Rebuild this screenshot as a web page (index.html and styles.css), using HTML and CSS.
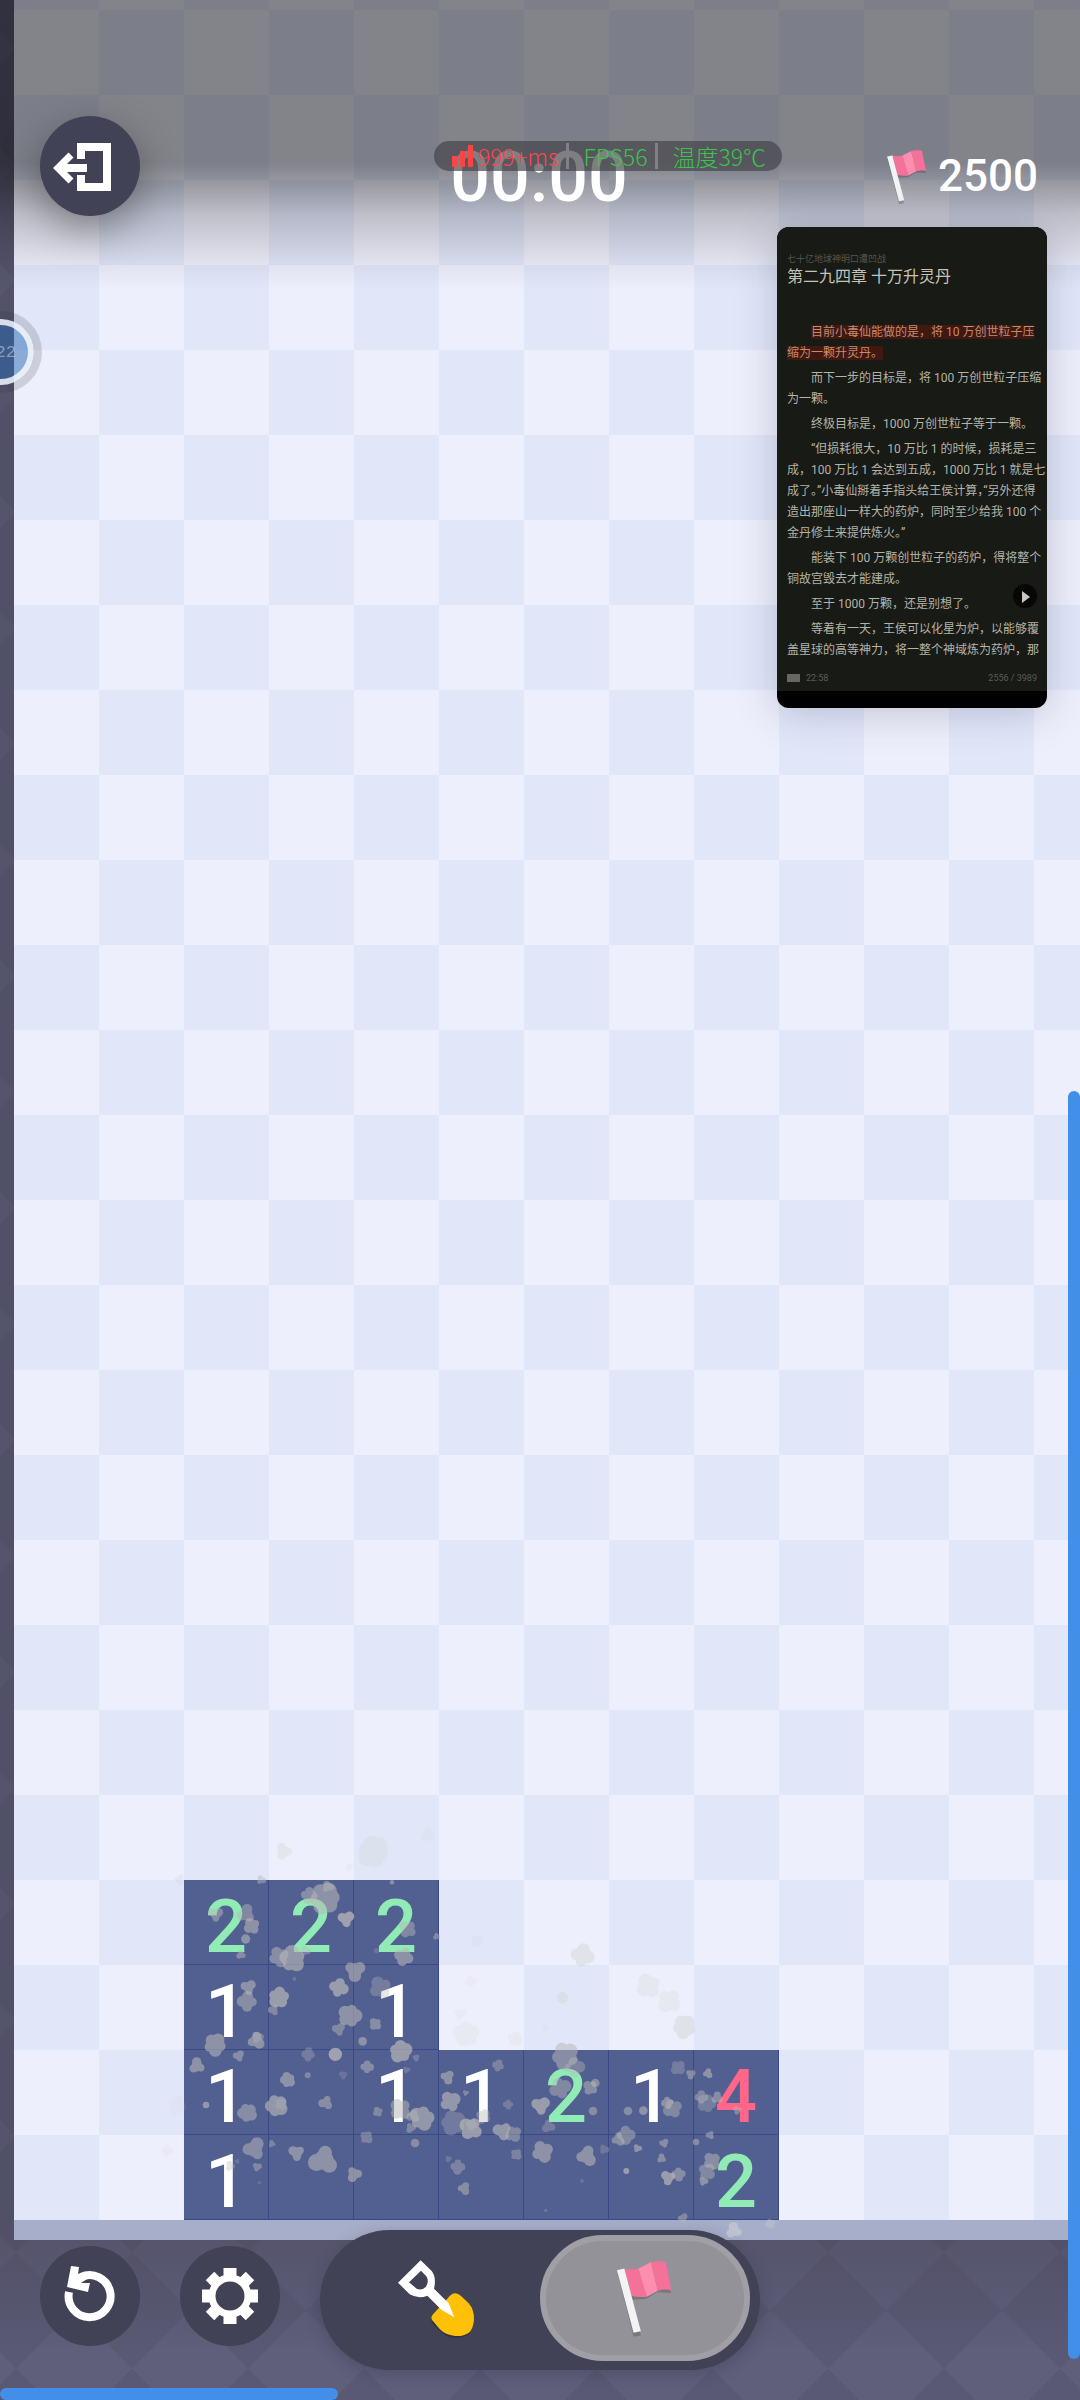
FILE: index.html
```html
<!DOCTYPE html>
<html lang="zh-CN">

<head>
    <meta charset="UTF-8">
    <meta name="viewport" content="width=device-width, initial-scale=1.0">
    <title>Minesweeper</title>
    <link rel="stylesheet" href="styles.css">
</head>

<body>
    <svg class="defs" aria-hidden="true">
        <symbol id="flag" viewBox="915 175 190 240">
            <path d="M926 222 L948 218 L996 408 L974 412 Z M968 300 L1012 298 L1045 278 L1088 280 L1080 258 L960 280 Z" fill="#000" opacity=".18" />
            <path d="M946 205 C960 211 975 210 989 206 L1014 291 C1000 293 985 292 968 289 Z" fill="#f4719a" />
            <path d="M989 206 L1026 187 L1047 273 L1014 291 Z" fill="#ff8db0" />
            <path d="M1026 187 C1040 183 1055 184 1071 186 L1088 271 C1073 268 1060 269 1047 273 Z" fill="#f4719a" />
            <path d="M924 211 L946 206 L996 395 L974 400 Z" fill="#f3f3f5" />
        </symbol>
    </svg>

    <header class="hud">
        <button class="round-btn exit-btn" aria-label="Exit">
            <svg viewBox="0 0 100 100" fill="none" stroke="#fff">
                <path d="M41 43 V31 H67 V71 H41 V59" stroke-width="8" />
                <path d="M17 52 H47" stroke-width="8" />
                <path d="M31 39 L18 52 L31 65" stroke-width="7" />
            </svg>
        </button>
        <div class="timer">00:00</div>
        <div class="flags-left">
            <svg class="flag-small"><use href="#flag" /></svg>
            <span>2500</span>
        </div>
    </header>

    <main class="board">
        <div class="field">
            <div class="cell n2">2</div>
            <div class="cell n2">2</div>
            <div class="cell n2">2</div>
            <button class="covered" aria-label="Covered"></button>
            <button class="covered" aria-label="Covered"></button>
            <button class="covered" aria-label="Covered"></button>
            <button class="covered" aria-label="Covered"></button>

            <div class="cell">1</div>
            <div class="cell"></div>
            <div class="cell">1</div>
            <button class="covered" aria-label="Covered"></button>
            <button class="covered" aria-label="Covered"></button>
            <button class="covered" aria-label="Covered"></button>
            <button class="covered" aria-label="Covered"></button>

            <div class="cell">1</div>
            <div class="cell"></div>
            <div class="cell">1</div>
            <div class="cell">1</div>
            <div class="cell n2">2</div>
            <div class="cell">1</div>
            <div class="cell n4">4</div>

            <div class="cell">1</div>
            <div class="cell"></div>
            <div class="cell"></div>
            <div class="cell"></div>
            <div class="cell"></div>
            <div class="cell"></div>
            <div class="cell n2">2</div>

            <svg class="dust" id="dust" viewBox="72 180 1785 1020"></svg>
        </div>
    </main>

    <footer class="toolbar">
        <button class="round-btn" aria-label="Restart">
            <svg viewBox="0 0 100 100">
                <path d="M29 46 A21 21 0 1 0 41 31" fill="none" stroke="#fff" stroke-width="8" />
                <path d="M31 20 L39 21 L38 28 L46 26 L47 33 L41 37 L50 37 L48 46 L27 41 Z" fill="#fff" />
            </svg>
        </button>
        <button class="round-btn" aria-label="Settings">
            <svg viewBox="0 0 100 100">
                <circle cx="50" cy="50" r="18" fill="none" stroke="#fff" stroke-width="7" />
                <g stroke="#fff" stroke-width="13">
                    <path d="M50 33 V22 M50 67 V78 M33 50 H22 M67 50 H78" />
                    <path d="M38 38 L30 30 M62 38 L70 30 M38 62 L30 70 M62 62 L70 70" stroke-width="12" />
                </g>
            </svg>
        </button>
        <div class="mode">
            <button class="mode-btn" aria-label="Dig">
                <svg class="shovel" viewBox="260 170 240 240">
                    <path d="M370 350 L425 287 Q442 270 458 287 L483 312 Q497 328 497 358 Q495 385 480 400 Q440 422 405 398 Q385 383 370 365 Z" fill="#000" opacity=".2" />
                    <path d="M373 340 L425 283 Q441 268 458 284 L481 306 Q498 325 497 355 Q495 378 485 391 Q468 406 440 404 Q410 400 394 383 L372 357 Q366 349 373 340 Z" fill="#ffc107" />
                    <path d="M269 244 L337 177 L370 209 Q385 228 377 262 L421 306 L438 348 L400 326 L357 283 Q330 294 304 279 Z M302 243 L325 262 Q340 269 353 256 Q363 240 354 225 L338 208 Z" fill="#fff" fill-rule="evenodd" />
                </svg>
            </button>
            <button class="mode-btn active" aria-label="Flag">
                <svg class="flag-large"><use href="#flag" /></svg>
            </button>
        </div>
    </footer>

    <!-- perf monitor -->
    <div class="perf">
        <span class="bad">
            <svg viewBox="0 0 22 22" width="22" height="22"><path d="M0 11h5v11H0z M8 6h5v16H8z M16 0h5v22h-5z" fill="#ff4343" /></svg>999+ms
        </span>
        <span class="good">FPS56</span>
        <span class="good">温度39℃</span>
    </div>

    <!-- floating reader window -->
    <article class="reader">
        <div class="page">
            <p class="book">七十亿地球神明口遭凹战</p>
            <h1>第二九四章 十万升灵丹</h1>
            <p class="para"><mark>目前小毒仙能做的是，将 10 万创世粒子压<br>缩为一颗升灵丹。</mark></p>
            <p class="para">而下一步的目标是，将 100 万创世粒子压缩<br>为一颗。</p>
            <p class="para">终极目标是，1000 万创世粒子等于一颗。</p>
            <p class="para">“但损耗很大，10 万比 1 的时候，损耗是三<br>成，100 万比 1 会达到五成，1000 万比 1 就是七<br><span class="half">成了。”小毒仙掰着手指头给王侯计算，“另外还得</span><br>造出那座山一样大的药炉，同时至少给我 100 个<br>金丹修士来提供炼火。”</p>
            <p class="para">能装下 100 万颗创世粒子的药炉，得将整个<br>铜故宫毁去才能建成。</p>
            <p class="para">至于 1000 万颗，还是别想了。</p>
            <p class="para">等着有一天，王侯可以化星为炉，以能够覆<br>盖星球的高等神力，将一整个神域炼为药炉，那</p>
            <div class="status">
                <span class="battery"></span>
                <span>22:58</span>
                <span class="pages">2556 / 3989</span>
            </div>
        </div>
        <button class="play" aria-label="Play">
            <svg viewBox="0 0 24 24"><path d="M9 7 L17 13 L9 19 Z" fill="#c8c8c0" /></svg>
        </button>
    </article>

    <div class="bubble"><span>22</span></div>
    <div class="scroll-y"></div>
    <div class="scroll-x"></div>

    <script src="script.js"></script>
</body>

</html>
```
FILE: styles.css
```css
* {
    box-sizing: border-box;
}

body {
    margin: 0;
    min-height: 100vh;
    display: flex;
    flex-direction: column;
    position: relative;
    overflow-x: hidden;
    font-family: "Roboto", sans-serif;
    color: #fff;
    background-color: #5f5e7b;
    background-image:
        linear-gradient(rgba(60, 60, 70, 0), rgba(60, 60, 70, 0.3) 15%, rgba(60, 60, 70, 0.3) 93%, rgba(60, 60, 70, 0) 98%),
        linear-gradient(45deg, #5a5974 25%, transparent 25% 75%, #5a5974 75%),
        linear-gradient(-45deg, #5a5974 25%, transparent 25% 75%, #5a5974 75%);
    background-size: 100% 100%, 116px 116px, 116px 116px;
    background-position: 0 0, 16px 106px, 16px 106px;
}

button {
    border: none;
    padding: 0;
    background: none;
    cursor: pointer;
}

p, h1 {
    margin: 0;
}

.defs {
    position: absolute;
    width: 0;
    height: 0;
}

/* top bar */
.hud {
    position: absolute;
    top: 0;
    left: 0;
    right: 0;
    z-index: 2;
    display: grid;
    grid-template-columns: 1fr auto 1fr;
    align-items: start;
    height: 290px;
    padding: 116px 42px 0 40px;
    background: linear-gradient(rgba(0, 0, 0, 0.45) 56%, rgba(0, 0, 0, 0.35) 64%, rgba(0, 0, 0, 0.2) 74%, rgba(0, 0, 0, 0.06) 90%, transparent);
    font-weight: 500;
}

.round-btn {
    width: 100px;
    height: 100px;
    border-radius: 50%;
    background: #424257;
}

.round-btn svg {
    display: block;
    width: 100%;
}

.exit-btn {
    box-shadow: 0 14px 40px rgba(0, 0, 0, 0.35);
}

.timer {
    font-size: 70px;
    line-height: 122px;
}

.flags-left {
    justify-self: end;
    display: flex;
    align-items: center;
    gap: 8px;
    height: 120px;
    font-size: 44px;
}

.flag-small {
    width: 45px;
    height: 57px;
}

/* board */
.board {
    flex: 1;
    display: flex;
    align-items: flex-end;
    margin-left: 14px;
    padding-left: 170px;
    border-bottom: 20px solid #a7aeca;
    background: conic-gradient(#e1e6f9 25%, #eeeffc 0 50%, #e1e6f9 0 75%, #eeeffc 0) left bottom / 170px 170px;
}

.field {
    position: relative;
    display: grid;
    grid-template-columns: repeat(7, 85px);
    grid-auto-rows: 85px;
}

.cell {
    display: flex;
    align-items: center;
    justify-content: center;
    padding-top: 10px;
    background: #515f91;
    border-right: 1px solid #394987;
    border-bottom: 1px solid #394987;
    font-size: 74px;
    font-weight: 500;
    line-height: 1;
}

.n2 {
    color: #91ebb5;
}

.n4 {
    color: #ff668a;
}

.dust {
    position: absolute;
    top: 0;
    left: 0;
    width: 100%;
    height: 100%;
    overflow: visible;
    pointer-events: none;
}

/* bottom bar */
.toolbar {
    display: flex;
    align-items: flex-start;
    gap: 40px;
    padding: 6px 40px 30px;
}

.mode {
    display: flex;
    width: 440px;
    height: 140px;
    margin-top: -16px;
    padding: 5px 10px 9px;
    border-radius: 70px;
    background: #424257;
    box-shadow: 0 4px 16px rgba(40, 40, 60, 0.25);
}

.mode-btn {
    width: 50%;
    display: flex;
    align-items: center;
    justify-content: center;
    border-radius: 63px;
}

.mode-btn.active {
    background: #929298;
    border: 6px solid #a09fa6;
}

.shovel {
    width: 80px;
    height: 80px;
}

.flag-large {
    width: 63px;
    height: 80px;
}

/* perf monitor */
.perf {
    position: absolute;
    top: 141px;
    left: 434px;
    z-index: 3;
    display: flex;
    align-items: center;
    height: 30px;
    padding: 0 16px 0 18px;
    border-radius: 15px;
    background: rgba(66, 66, 72, 0.68);
    font: 300 23px/30px "Noto Sans CJK SC", sans-serif;
    white-space: nowrap;
}

.perf span {
    display: flex;
    align-items: center;
    gap: 4px;
}

.perf span + span {
    margin-left: 8px;
    padding-left: 14px;
    border-left: 3px solid #808087;
    line-height: 26px;
}

.bad {
    color: #f8484c;
}

.good {
    color: #3cc34c;
}

/* reader */
.reader {
    position: absolute;
    top: 227px;
    right: 33px;
    z-index: 3;
    width: 270px;
    padding-bottom: 17px;
    border-radius: 12px;
    overflow: hidden;
    background: #000;
    box-shadow: 0 4px 40px rgba(60, 60, 90, 0.25);
    font-family: "Roboto", "Noto Sans CJK SC", sans-serif;
}

.page {
    padding: 26px 10px 6px;
    background: #181a15;
    color: #b4b3a8;
    white-space: nowrap;
}

.book {
    font-size: 9px;
    line-height: 12px;
    color: #55574f;
}

.reader h1 {
    margin-bottom: 33px;
    font-size: 16px;
    line-height: 24px;
    font-weight: normal;
    color: #c4c3b8;
}

.para {
    margin-bottom: 4px;
    font-size: 12px;
    line-height: 21px;
    text-indent: 24px;
}

.para mark {
    background: #40180f;
    color: #c58a70;
}

.half {
    font-feature-settings: "halt";
}

.status {
    display: flex;
    align-items: center;
    gap: 6px;
    margin-top: 10px;
    font-size: 9px;
    line-height: 14px;
    color: #5c5d55;
}

.battery {
    width: 13px;
    height: 8px;
    background: #66675f;
}

.pages {
    margin-left: auto;
}

.play {
    position: absolute;
    right: 10px;
    bottom: 100px;
    width: 24px;
    height: 24px;
    border-radius: 50%;
    background: #070806;
}

.play svg {
    display: block;
}

/* floating bubble on the left edge */
.bubble {
    position: absolute;
    top: 311px;
    left: -40px;
    z-index: 3;
    display: flex;
    align-items: center;
    justify-content: flex-end;
    width: 82px;
    height: 82px;
    padding-right: 18px;
    border: 8px solid rgba(50, 50, 60, 0.17);
    border-radius: 50%;
    background: rgba(38, 104, 180, 0.5);
    background-clip: padding-box;
    box-shadow: inset 0 0 0 6px rgba(255, 255, 255, 0.8);
    color: rgba(200, 200, 215, 0.6);
    font: 17px/1 "Liberation Mono", monospace;
}

/* scroll indicators */
.scroll-y,
.scroll-x {
    position: absolute;
    z-index: 4;
    border-radius: 6px;
    background: #428fea;
}

.scroll-y {
    right: 0;
    top: 1091px;
    bottom: 41px;
    width: 12px;
}

.scroll-x {
    left: 0;
    bottom: 0;
    width: 338px;
    height: 12px;
}
```
FILE: script.js
```javascript
// puffs of dust: x, y, radius, lobes, opacity
const puffs = [
    [372, 95, 25, 3, .3], [640, 95, 46, 6, .25], [805, 45, 22, 3, .12], [568, 140, 12, 3, .15], [58, 178, 15, 3, .25],
    [303, 180, 14, 3, .4], [167, 283, 22, 3, .45], [258, 282, 28, 3, .4], [276, 318, 24, 4, .5], [257, 357, 14, 1, .5],
    [243, 404, 14, 3, .45], [446, 226, 24, 4, .45], [495, 235, 45, 6, .5], [503, 200, 18, 3, .4], [558, 297, 25, 3, .65],
    [744, 328, 26, 4, .4], [732, 410, 28, 4, .5], [696, 187, 7, 1, .45], [830, 349, 11, 3, .4], [356, 410, 30, 4, .45],
    [397, 417, 38, 5, .55], [436, 393, 15, 3, .35], [265, 502, 23, 3, .5], [262, 545, 29, 4, .45], [357, 532, 31, 5, .6],
    [341, 570, 16, 3, .4], [403, 477, 6, 1, .25], [585, 451, 32, 3, .5], [536, 503, 28, 4, .6], [570, 587, 34, 5, .5],
    [536, 628, 20, 3, .4], [662, 503, 33, 4, .3], [647, 612, 18, 4, .45], [608, 664, 13, 1, .5], [649, 392, 8, 1, .2],
    [165, 674, 33, 5, .5], [288, 662, 26, 3, .5], [292, 652, 18, 3, .35], [236, 708, 17, 3, .45], [111, 738, 24, 3, .5],
    [138, 855, 10, 1, .55], [262, 878, 28, 5, .45], [349, 857, 33, 5, .55], [362, 852, 18, 4, .25], [383, 780, 22, 5, .5],
    [443, 766, 9, 1, .4], [445, 704, 20, 4, .3], [526, 703, 20, 1, .65], [550, 765, 13, 3, .2], [498, 848, 21, 3, .45],
    [722, 694, 33, 5, .6], [768, 713, 11, 3, .3], [621, 741, 19, 4, .45], [739, 750, 11, 3, .25], [654, 876, 15, 4, .4],
    [722, 868, 32, 4, .45], [786, 894, 36, 5, .55], [760, 888, 20, 3, .4], [752, 923, 15, 3, .4], [862, 771, 21, 3, .5],
    [870, 845, 31, 4, .55], [917, 819, 9, 3, .4], [283, 987, 34, 3, .45], [336, 972, 11, 3, .35], [410, 998, 24, 3, .5],
    [491, 1020, 44, 3, .5], [582, 1062, 23, 3, .5], [619, 952, 19, 4, .35], [765, 969, 13, 1, .45], [291, 1041, 14, 3, .4],
    [232, 1024, 8, 3, .2], [211, 1038, 15, 3, .3], [298, 1088, 5, 1, .2], [879, 908, 36, 5, .28], [50, 855, 28, 4, .08],
    [20, 992, 18, 4, .14], [931, 485, 17, 4, .12], [900, 582, 17, 3, .16], [920, 642, 38, 5, .2], [933, 925, 34, 4, .6],
    [936, 913, 17, 4, .35], [893, 1040, 22, 4, .35], [865, 1016, 10, 3, .25], [912, 1105, 19, 3, .45], [950, 365, 18, 4, .12],
    [970, 890, 22, 4, .35], [1015, 737, 17, 4, .35], [1045, 853, 15, 4, .3], [1028, 933, 28, 3, .55], [1060, 941, 24, 4, .4],
    [1068, 1003, 17, 4, .35], [1065, 657, 22, 4, .2], [1267, 407, 34, 4, .4], [1207, 533, 17, 1, .35], [1157, 623, 10, 1, .12],
    [1467, 498, 36, 4, .25], [1528, 542, 36, 4, .22], [1572, 620, 34, 5, .45], [1215, 708, 40, 5, .45], [1243, 742, 30, 4, .35],
    [1200, 805, 32, 4, .4], [1142, 857, 28, 3, .6], [1292, 803, 22, 4, .45], [1306, 789, 13, 1, .45], [1299, 873, 13, 1, .45],
    [1166, 918, 20, 3, .3], [1147, 995, 32, 4, .5], [1279, 1008, 31, 3, .5], [1332, 988, 15, 3, .25], [1404, 873, 13, 1, .45],
    [1450, 872, 13, 1, .5], [1523, 848, 18, 4, .5], [1538, 865, 28, 4, .4], [1554, 742, 22, 4, .3], [1592, 762, 15, 3, .45],
    [1643, 760, 15, 3, .5], [1624, 832, 19, 4, .4], [1640, 850, 28, 5, .3], [1672, 834, 18, 3, .45], [1732, 871, 13, 3, .4],
    [1651, 945, 13, 3, .45], [1608, 966, 10, 1, .45], [1397, 945, 27, 4, .4], [1374, 958, 20, 3, .45], [1432, 985, 13, 3, .5],
    [1512, 970, 14, 3, .45], [1505, 1016, 14, 3, .45], [1525, 1073, 22, 3, .6], [1556, 1062, 20, 4, .45], [1399, 1053, 9, 1, .6],
    [1655, 1023, 26, 4, .45], [1640, 1055, 25, 4, .4], [1630, 1084, 14, 3, .5], [1569, 1195, 15, 3, .4], [1722, 1232, 24, 3, .45],
    [1832, 1210, 15, 4, .25], [1157, 1171, 5, 1, .25], [1266, 1082, 6, 1, .2]
];

const ns = 'http://www.w3.org/2000/svg';
const dust = document.getElementById('dust');

function circle(group, x, y, r) {
    const c = document.createElementNS(ns, 'circle');
    c.setAttribute('cx', x);
    c.setAttribute('cy', y);
    c.setAttribute('r', r);
    group.appendChild(c);
}

puffs.forEach(([x, y, r, lobes, opacity], i) => {
    const g = document.createElementNS(ns, 'g');
    const outside = y < 180 || y > 1200 || x < 72 || (x > 837 && y < 690);
    g.setAttribute('fill', outside ? '#d2d6d6' : '#b9b8b8');
    g.setAttribute('opacity', opacity * 1.15);
    if (lobes === 1) {
        circle(g, x, y, r);
    } else {
        circle(g, x, y, r * 0.68);
        for (let k = 0; k < lobes; k++) {
            const a = i * 1.3 + k * Math.PI * 2 / lobes;
            circle(g, x + Math.cos(a) * r * 0.52, y + Math.sin(a) * r * 0.52, r * (0.46 + (k + i) % 3 * 0.06));
        }
    }
    dust.appendChild(g);
});
```
